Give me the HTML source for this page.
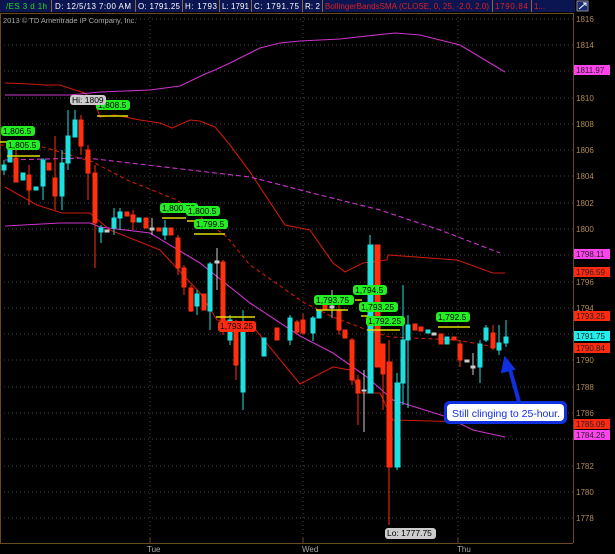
<!DOCTYPE html>
<html><head><meta charset="utf-8"><style>
body{margin:0;background:#000;width:615px;height:554px;overflow:hidden;font-family:"Liberation Sans",sans-serif}
svg{display:block}
</style></head><body>
<svg width="615" height="554" xmlns="http://www.w3.org/2000/svg" font-family="Liberation Sans, sans-serif">
<rect width="615" height="554" fill="#000"/>
<!-- header -->
<rect x="0" y="0" width="575" height="12" fill="#0a1552"/>
<g font-size="8">
<text x="6" y="9" fill="#22dd22" textLength="41">/ES 3 d 1h</text>
<text x="55" y="9" fill="#fff" textLength="76">D: 12/5/13 7:00 AM</text>
<text x="138" y="9" fill="#fff" textLength="42">O: 1791.25</text>
<text x="185" y="9" fill="#fff" textLength="32">H: 1793</text>
<text x="222" y="9" fill="#fff" textLength="27">L: 1791</text>
<text x="254" y="9" fill="#fff" textLength="45">C: 1791.75</text>
<text x="305" y="9" fill="#fff" textLength="15">R: 2</text>
<text x="325" y="9" fill="#e02020" textLength="164">BollingerBandsSMA (CLOSE, 0, 25, -2.0, 2.0)</text>
<text x="495" y="9" fill="#e02020" textLength="33">1790.84</text>
<text x="534" y="9" fill="#e02020">1...</text>
</g>
<g stroke="#8a6a3a" stroke-width="1">
<line x1="51.5" y1="0" x2="51.5" y2="12"/><line x1="135.5" y1="0" x2="135.5" y2="12"/><line x1="182.5" y1="0" x2="182.5" y2="12"/><line x1="219.5" y1="0" x2="219.5" y2="12"/><line x1="251.5" y1="0" x2="251.5" y2="12"/><line x1="302.5" y1="0" x2="302.5" y2="12"/><line x1="322.5" y1="0" x2="322.5" y2="12"/><line x1="492.5" y1="0" x2="492.5" y2="12"/><line x1="531.5" y1="0" x2="531.5" y2="12"/>
</g>
<rect x="577" y="1" width="11" height="10" fill="#1a2a70" stroke="#889" stroke-width="1"/>
<path d="M579 9 L586 3 M583 3 h3 v3" stroke="#fff" fill="none"/>
<!-- frame -->
<line x1="0" y1="13.5" x2="573" y2="13.5" stroke="#6b4a1e"/>
<line x1="573.5" y1="13" x2="573.5" y2="543" stroke="#6b4a1e"/>
<line x1="0" y1="543.5" x2="573" y2="543.5" stroke="#6b4a1e"/>
<line x1="0.5" y1="13" x2="0.5" y2="543" stroke="#6b4a1e"/>
<text x="3" y="23" font-size="7.5" fill="#aaa">2013 © TD Ameritrade IP Company, Inc.</text>
<!-- grid -->
<g stroke="#444" stroke-dasharray="1,3">
<line x1="0" y1="19" x2="573" y2="19"/><line x1="0" y1="45" x2="573" y2="45"/><line x1="0" y1="71" x2="573" y2="71"/><line x1="0" y1="98" x2="573" y2="98"/><line x1="0" y1="124" x2="573" y2="124"/><line x1="0" y1="150" x2="573" y2="150"/><line x1="0" y1="176" x2="573" y2="176"/><line x1="0" y1="203" x2="573" y2="203"/><line x1="0" y1="229" x2="573" y2="229"/><line x1="0" y1="255" x2="573" y2="255"/><line x1="0" y1="282" x2="573" y2="282"/><line x1="0" y1="308" x2="573" y2="308"/><line x1="0" y1="334" x2="573" y2="334"/><line x1="0" y1="360" x2="573" y2="360"/><line x1="0" y1="387" x2="573" y2="387"/><line x1="0" y1="413" x2="573" y2="413"/><line x1="0" y1="439" x2="573" y2="439"/><line x1="0" y1="466" x2="573" y2="466"/><line x1="0" y1="492" x2="573" y2="492"/><line x1="0" y1="518" x2="573" y2="518"/>
<line x1="150" y1="13" x2="150" y2="543"/><line x1="303" y1="13" x2="303" y2="543"/><line x1="458" y1="13" x2="458" y2="543"/>
</g>
<g stroke="#6b4a1e"><line x1="150" y1="538" x2="150" y2="543"/><line x1="303" y1="538" x2="303" y2="543"/><line x1="458" y1="538" x2="458" y2="543"/></g>
<g font-size="8" fill="#aaa"><text x="147" y="552">Tue</text><text x="302" y="552">Wed</text><text x="457" y="552">Thu</text></g>
<!-- axis labels -->
<g font-size="8" fill="#b08a5a">
<text x="576" y="22">1816</text><text x="576" y="48">1814</text><text x="576" y="101">1810</text><text x="576" y="127">1808</text><text x="576" y="153">1806</text><text x="576" y="179">1804</text><text x="576" y="206">1802</text><text x="576" y="232">1800</text><text x="576" y="285">1796</text><text x="576" y="311">1794</text><text x="576" y="363">1790</text><text x="576" y="390">1788</text><text x="576" y="416">1786</text><text x="576" y="469">1782</text><text x="576" y="495">1780</text><text x="576" y="521">1778</text>
</g>
<g font-size="8">
<rect x="574" y="65" width="36" height="10" fill="#ff44ee"/><text x="576" y="73" fill="#222">1811.97</text>
<rect x="574" y="249" width="36" height="10" fill="#ff44ee"/><text x="576" y="257" fill="#222">1798.11</text>
<rect x="574" y="267" width="36" height="10" fill="#ff2a10"/><text x="576" y="275" fill="#222">1796.59</text>
<rect x="574" y="311" width="36" height="10" fill="#ff2a10"/><text x="576" y="319" fill="#222">1793.25</text>
<rect x="574" y="331" width="36" height="10" fill="#22eeee"/><text x="576" y="339" fill="#222">1791.75</text>
<rect x="574" y="343" width="36" height="10" fill="#ff2a10"/><text x="576" y="351" fill="#222">1790.84</text>
<rect x="574" y="419" width="36" height="10" fill="#ff2a10"/><text x="576" y="427" fill="#222">1785.09</text>
<rect x="574" y="430" width="36" height="10" fill="#ff44ee"/><text x="576" y="438" fill="#222">1784.26</text>
</g>
<!-- bands -->
<g fill="none" stroke-width="1.1">
<polyline stroke="#cc1a0a" points="5,83 30,84 45,85 60,85 75,90 85,93 95,103 100,117 115,115 140,120 160,123 172,128 190,120 200,121 215,127 230,145 250,172 285,225 310,230 333,263 345,272 363,263 387,260 388,255 457,260 493,273 505,273"/>
<polyline stroke="#cc1a0a" stroke-dasharray="4,3" points="0,145 43,147 93,162 127,180 177,200 227,237 250,265 303,302 333,317 367,330 390,337 457,340 500,348"/>
<polyline stroke="#cc1a0a" points="5,187 37,205 62,213 90,213 110,230 160,250 200,293 217,320 250,323 300,384 333,367 350,370 360,393 380,393 393,420 507,423"/>
<polyline stroke="#cc33cc" points="5,95 70,95 100,92 150,90 180,86 205,74 215,70 230,63 240,58 260,48 280,43 300,41 340,39 385,34 395,33 420,35 460,45 505,72"/>
<polyline stroke="#cc33cc" stroke-dasharray="5,3" points="5,160 87,158 250,177 320,195 380,210 440,230 500,253"/>
<polyline stroke="#cc33cc" points="5,226 60,223 90,223 100,227 150,233 200,263 250,303 300,336 333,353 367,377 393,400 447,417 473,430 505,437"/>
</g>
<!-- candles -->
<g stroke-width="1">
<g stroke="#1fe0e0" fill="#1fe0e0">
<line x1="4" y1="160" x2="4" y2="175"/><rect x="2" y="165" width="4" height="5"/>
<rect x="8" y="150" width="4" height="12"/>
<rect x="21" y="173" width="4" height="7"/>
<rect x="34" y="187" width="4" height="3"/>
<line x1="43" y1="158" x2="43" y2="200"/><rect x="41" y="160" width="4" height="26"/>
<line x1="62" y1="150" x2="62" y2="210"/><rect x="60" y="163" width="4" height="33"/>
<line x1="68" y1="110" x2="68" y2="170"/><rect x="66" y="136" width="4" height="27"/>
<line x1="75" y1="110" x2="75" y2="137"/><rect x="73" y="120" width="4" height="17"/>
<line x1="101" y1="225" x2="101" y2="243"/><rect x="99" y="228" width="4" height="4"/>
<line x1="114" y1="208" x2="114" y2="235"/><rect x="112" y="218" width="4" height="10"/>
<line x1="120" y1="208" x2="120" y2="230"/><rect x="118" y="212" width="4" height="6"/>
<rect x="137" y="218" width="4" height="4"/>
<line x1="165" y1="220" x2="165" y2="240"/><rect x="163" y="228" width="4" height="7"/>
<line x1="197" y1="290" x2="197" y2="315"/><rect x="195" y="294" width="4" height="12"/>
<line x1="210" y1="262" x2="210" y2="330"/><rect x="208" y="264" width="4" height="47"/>
<line x1="230" y1="315" x2="230" y2="345"/><rect x="228" y="320" width="4" height="20"/>
<line x1="243" y1="310" x2="243" y2="410"/><rect x="241" y="322" width="4" height="70"/>
<rect x="262" y="338" width="4" height="18"/>
<line x1="290" y1="315" x2="290" y2="345"/><rect x="288" y="318" width="4" height="22"/>
<line x1="313" y1="316" x2="313" y2="341"/><rect x="311" y="318" width="4" height="15"/>
<rect x="317" y="310" width="4" height="8"/>
<line x1="370" y1="235" x2="370" y2="393"/><rect x="368" y="245" width="5" height="148"/>
<line x1="397" y1="373" x2="397" y2="470"/><rect x="395" y="383" width="5" height="84"/>
<line x1="403" y1="285" x2="403" y2="405"/><rect x="401" y="340" width="4" height="43"/>
<line x1="408" y1="315" x2="408" y2="408"/><rect x="406" y="325" width="4" height="15"/>
<rect x="426" y="330" width="4" height="3"/>
<rect x="445" y="337" width="4" height="7"/>
<line x1="480" y1="340" x2="480" y2="383"/><rect x="478" y="344" width="4" height="23"/>
<line x1="486" y1="325" x2="486" y2="342"/><rect x="484" y="328" width="4" height="12"/>
<line x1="499" y1="325" x2="499" y2="355"/><rect x="497" y="343" width="4" height="7"/>
<line x1="506" y1="320" x2="506" y2="347"/><rect x="504" y="337" width="4" height="6"/>
</g>
<g stroke="#ff3010" fill="#ff3010">
<line x1="16" y1="140" x2="16" y2="182"/><rect x="14" y="158" width="4" height="24"/>
<line x1="29" y1="165" x2="29" y2="205"/><rect x="27" y="175" width="4" height="15"/>
<rect x="47" y="163" width="4" height="7"/>
<line x1="55" y1="136" x2="55" y2="210"/><rect x="53" y="178" width="4" height="18"/>
<line x1="81" y1="115" x2="81" y2="155"/><rect x="79" y="120" width="4" height="26"/>
<line x1="88" y1="145" x2="88" y2="200"/><rect x="86" y="150" width="4" height="23"/>
<line x1="95" y1="165" x2="95" y2="268"/><rect x="93" y="173" width="4" height="50"/>
<rect x="125" y="212" width="4" height="4"/>
<line x1="133" y1="210" x2="133" y2="230"/><rect x="131" y="215" width="4" height="7"/>
<rect x="144" y="218" width="4" height="10"/>
<rect x="157" y="228" width="4" height="3"/>
<rect x="169" y="228" width="4" height="7"/>
<line x1="178" y1="235" x2="178" y2="275"/><rect x="176" y="238" width="4" height="30"/>
<line x1="184" y1="265" x2="184" y2="295"/><rect x="182" y="268" width="4" height="19"/>
<line x1="191" y1="285" x2="191" y2="312"/><rect x="189" y="288" width="4" height="23"/>
<rect x="202" y="294" width="4" height="16"/>
<line x1="223" y1="260" x2="223" y2="335"/><rect x="221" y="262" width="4" height="68"/>
<line x1="236" y1="320" x2="236" y2="380"/><rect x="234" y="325" width="4" height="40"/>
<rect x="275" y="328" width="4" height="12"/>
<line x1="297" y1="320" x2="297" y2="335"/><rect x="295" y="322" width="4" height="10"/>
<line x1="303" y1="314" x2="303" y2="335"/><rect x="301" y="320" width="4" height="13"/>
<rect x="323" y="305" width="4" height="4"/>
<line x1="339" y1="303" x2="339" y2="335"/><rect x="337" y="310" width="4" height="20"/>
<rect x="343" y="330" width="4" height="8"/>
<line x1="352" y1="338" x2="352" y2="385"/><rect x="350" y="340" width="4" height="40"/>
<line x1="358" y1="375" x2="358" y2="425"/><rect x="356" y="380" width="4" height="13"/>
<rect x="375" y="245" width="5" height="122"/>
<line x1="389" y1="340" x2="389" y2="525"/><rect x="387" y="362" width="5" height="105"/>
<line x1="383" y1="344" x2="383" y2="410"/><rect x="381" y="344" width="4" height="30"/>
<rect x="413" y="324" width="4" height="6"/>
<rect x="419" y="327" width="4" height="4"/>
<rect x="439" y="334" width="4" height="10"/>
<rect x="452" y="337" width="4" height="3"/>
<line x1="460" y1="340" x2="460" y2="367"/><rect x="458" y="344" width="4" height="16"/>
<line x1="493" y1="325" x2="493" y2="350"/><rect x="491" y="333" width="4" height="15"/>
</g>
<g stroke="#ccc" fill="#ccc">
<rect x="105" y="230" width="4" height="2"/><line x1="152" y1="218" x2="152" y2="235"/><rect x="150" y="228" width="4" height="2"/>
<line x1="217" y1="248" x2="217" y2="290"/><rect x="215" y="261" width="4" height="2"/>
<line x1="332" y1="290" x2="332" y2="318"/><rect x="330" y="306" width="4" height="2"/>
<line x1="364" y1="370" x2="364" y2="432"/><rect x="362" y="390" width="4" height="1"/>
<rect x="432" y="333" width="4" height="2"/><rect x="465" y="360" width="4" height="2"/><line x1="473" y1="353" x2="473" y2="375"/><rect x="471" y="366" width="4" height="2"/>
</g>
</g>
<!-- yellow level lines -->
<g stroke="#dddd00" stroke-width="1.5">
<line x1="0" y1="142" x2="10" y2="142"/><line x1="7" y1="156" x2="40" y2="156"/><line x1="97" y1="116" x2="128" y2="116"/>
<line x1="162" y1="218" x2="186" y2="218"/><line x1="187" y1="221" x2="196" y2="221"/><line x1="194" y1="234" x2="225" y2="234"/>
<line x1="216" y1="317" x2="255" y2="317"/>
<line x1="316" y1="310" x2="348" y2="310"/><line x1="355" y1="300" x2="362" y2="300"/><line x1="361" y1="316" x2="368" y2="316"/><line x1="367" y1="330" x2="400" y2="330"/><line x1="438" y1="327" x2="470" y2="327"/>
</g>
<!-- green labels -->
<g font-size="8.5" fill="#000">
<rect x="1" y="126" width="34" height="10" rx="3" fill="#22ee22"/><text x="3" y="134">1,806.5</text>
<rect x="6" y="140" width="34" height="10" rx="3" fill="#22ee22"/><text x="8" y="148">1,805.5</text>
<rect x="96" y="100" width="34" height="10" rx="3" fill="#22ee22"/><text x="98" y="108">1,808.5</text>
<rect x="70" y="95" width="36" height="10" rx="3" fill="#ccc"/><text x="72" y="103">Hi: 1809</text>
<rect x="160" y="203" width="38" height="10" rx="3" fill="#22ee22"/><text x="162" y="211">1,800.75</text>
<rect x="186" y="206" width="34" height="10" rx="3" fill="#22ee22"/><text x="188" y="214">1,800.5</text>
<rect x="194" y="219" width="34" height="10" rx="3" fill="#22ee22"/><text x="196" y="227">1,799.5</text>
<rect x="218" y="321" width="38" height="11" rx="3" fill="#ff2a10"/><text x="220" y="329">1,793.25</text>
<rect x="314" y="295" width="40" height="10" rx="3" fill="#22ee22"/><text x="316" y="303">1,793.75</text>
<rect x="353" y="285" width="34" height="10" rx="3" fill="#22ee22"/><text x="355" y="293">1,794.5</text>
<rect x="359" y="302" width="39" height="10" rx="3" fill="#22ee22"/><text x="361" y="310">1,793.25</text>
<rect x="366" y="316" width="39" height="10" rx="3" fill="#22ee22"/><text x="368" y="324">1,792.25</text>
<rect x="436" y="312" width="34" height="10" rx="3" fill="#22ee22"/><text x="438" y="320">1,792.5</text>
<rect x="385" y="528" width="51" height="11" rx="3" fill="#ccc"/><text x="387" y="536">Lo: 1777.75</text>
</g>
<!-- callout -->
<path d="M519 402 L508 362" stroke="#1030e0" stroke-width="4"/>
<path d="M505 358 L502 372 L514 369 Z" fill="#1030e0" stroke="#1030e0" stroke-width="2"/>
<rect x="444" y="401" width="123" height="23" rx="5" fill="#1030e0"/>
<rect x="447" y="404" width="117" height="17" rx="4" fill="#fff"/>
<text x="452" y="417" font-size="10.5" fill="#1030e0" textLength="108">Still clinging to 25-hour.</text>
</svg>
</body></html>
